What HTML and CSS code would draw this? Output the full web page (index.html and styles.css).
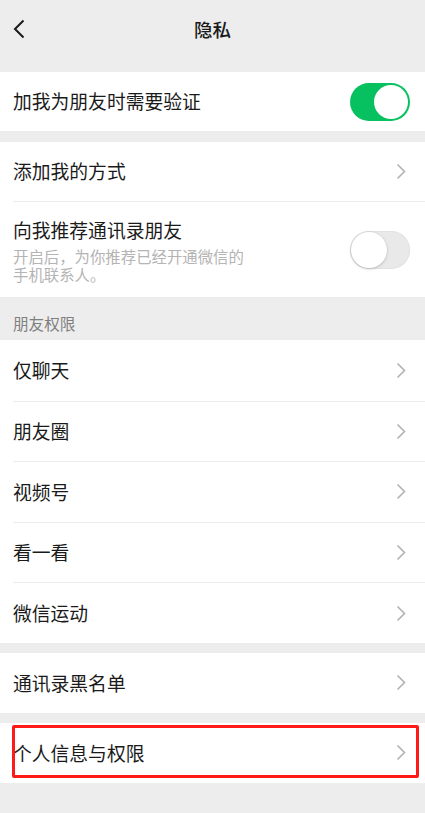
FILE: index.html
```html
<!DOCTYPE html>
<html lang="zh-CN">
<head>
<meta charset="utf-8">
<title>隐私</title>
<link rel="stylesheet" href="styles.css">
</head>
<body>
<div class="page">
  <header class="nav">
    <span class="back">
      <svg width="12" height="20" viewBox="0 0 12 20"><path d="M10.5 1.5 L2 10 L10.5 18.5" fill="none" stroke="#1a1a1a" stroke-width="2"/></svg>
    </span>
    <h1 class="title">隐私</h1>
  </header>

  <section class="group">
    <div class="row h59">
      <div class="cell">
        <span class="label">加我为朋友时需要验证</span>
        <span class="switch on"><span class="knob"></span></span>
      </div>
    </div>
  </section>

  <section class="group g11">
    <div class="row h59">
      <div class="cell">
        <span class="label">添加我的方式</span>
        <svg class="arrow" width="10" height="17" viewBox="0 0 10 17"><path d="M1.5 1.5 L8.5 8.5 L1.5 15.5" fill="none" stroke="#b2b2b2" stroke-width="1.6"/></svg>
      </div>
    </div>
    <div class="row tall">
      <div class="cell sep">
        <div class="texts">
          <span class="label">向我推荐通讯录朋友</span>
          <span class="desc">开启后，为你推荐已经开通微信的</span>
          <span class="desc">手机联系人。</span>
        </div>
        <span class="switch off"><span class="knob"></span></span>
      </div>
    </div>
  </section>

  <div class="section-title">朋友权限</div>

  <section class="group">
    <div class="row r5"><div class="cell"><span class="label">仅聊天</span><svg class="arrow" width="10" height="17" viewBox="0 0 10 17"><path d="M1.5 1.5 L8.5 8.5 L1.5 15.5" fill="none" stroke="#b2b2b2" stroke-width="1.6"/></svg></div></div>
    <div class="row r5"><div class="cell sep"><span class="label">朋友圈</span><svg class="arrow" width="10" height="17" viewBox="0 0 10 17"><path d="M1.5 1.5 L8.5 8.5 L1.5 15.5" fill="none" stroke="#b2b2b2" stroke-width="1.6"/></svg></div></div>
    <div class="row r5"><div class="cell sep"><span class="label">视频号</span><svg class="arrow" width="10" height="17" viewBox="0 0 10 17"><path d="M1.5 1.5 L8.5 8.5 L1.5 15.5" fill="none" stroke="#b2b2b2" stroke-width="1.6"/></svg></div></div>
    <div class="row r5"><div class="cell sep"><span class="label">看一看</span><svg class="arrow" width="10" height="17" viewBox="0 0 10 17"><path d="M1.5 1.5 L8.5 8.5 L1.5 15.5" fill="none" stroke="#b2b2b2" stroke-width="1.6"/></svg></div></div>
    <div class="row r5"><div class="cell sep"><span class="label">微信运动</span><svg class="arrow" width="10" height="17" viewBox="0 0 10 17"><path d="M1.5 1.5 L8.5 8.5 L1.5 15.5" fill="none" stroke="#b2b2b2" stroke-width="1.6"/></svg></div></div>
  </section>

  <section class="group g10">
    <div class="row"><div class="cell"><span class="label">通讯录黑名单</span><svg class="arrow" width="10" height="17" viewBox="0 0 10 17"><path d="M1.5 1.5 L8.5 8.5 L1.5 15.5" fill="none" stroke="#b2b2b2" stroke-width="1.6"/></svg></div></div>
  </section>

  <section class="group g10">
    <div class="row highlight"><div class="cell"><span class="label">个人信息与权限</span><svg class="arrow" width="10" height="17" viewBox="0 0 10 17"><path d="M1.5 1.5 L8.5 8.5 L1.5 15.5" fill="none" stroke="#b2b2b2" stroke-width="1.6"/></svg></div><span class="mark"></span></div>
  </section>
</div>
</body>
</html>
```

FILE: styles.css
```css
* { box-sizing: border-box; }
html, body {
  margin: 0;
  padding: 0;
  background: #ededed;
}
body {
  font-family: "Noto Sans CJK SC", "Noto Sans", sans-serif;
  color: #1a1a1a;
}
.page {
  width: 425px;
  min-height: 813px;
  background: #ededed;
}
.nav {
  height: 60px;
  margin-bottom: 12px;
  display: flex;
  align-items: center;
  justify-content: center;
  position: relative;
}
.back {
  position: absolute;
  left: 13px;
  top: 19px;
  display: flex;
}
.title {
  margin: 0 0 2px;
  font-size: 18.5px;
  font-weight: 500;
  line-height: 1;
  color: #1a1a1a;
}
.group { background: #fff; }
.g11 { margin-top: 11px; }
.g10 { margin-top: 10px; }
.row {
  height: 60px;
  padding-left: 13px;
  display: flex;
  position: relative;
}
.row.r5 { height: 60.6px; }
.row.h59 { height: 59px; }
.row.tall { height: 96px; }
.cell {
  flex: 1;
  display: flex;
  align-items: center;
  justify-content: space-between;
  padding-right: 18px;
}
.cell.sep { border-top: 1px solid #ececec; }
.label {
  font-size: 18.8px;
  line-height: 1;
  color: #1a1a1a;
}
.texts {
  display: flex;
  flex-direction: column;
  padding-top: 5px;
}
.label + .desc { margin-top: 7px; }
.desc {
  font-size: 15.4px;
  line-height: 18px;
  height: 18px;
  color: #b4b4b4;
}
.arrow { display: block; margin-right: 1px; }
.switch {
  width: 60px;
  height: 38px;
  border-radius: 19px;
  display: flex;
  align-items: center;
  margin-right: -3px;
}
.switch.on {
  background: #07c160;
  justify-content: flex-end;
  padding-right: 2px;
}
.switch.off {
  background: #e9e9e9;
  justify-content: flex-start;
  padding-left: 1px;
  box-shadow: inset 0 0 0 1px #e2e2e2;
}
.knob {
  width: 34px;
  height: 34px;
  border-radius: 50%;
  background: #fff;
}
.switch.off .knob {
  width: 36px;
  height: 36px;
  box-shadow: 0 1px 3px rgba(0,0,0,0.18), 0 0 0 0.5px rgba(0,0,0,0.06);
}
.section-title {
  height: 43px;
  padding: 16px 13px 0;
  font-size: 15.6px;
  line-height: 20px;
  color: #7f7f7f;
}
.highlight .mark {
  position: absolute;
  left: 12px;
  right: 6px;
  top: 2px;
  bottom: 5px;
  border: 3px solid #ff1a1a;
  border-radius: 2px;
  pointer-events: none;
}
```
